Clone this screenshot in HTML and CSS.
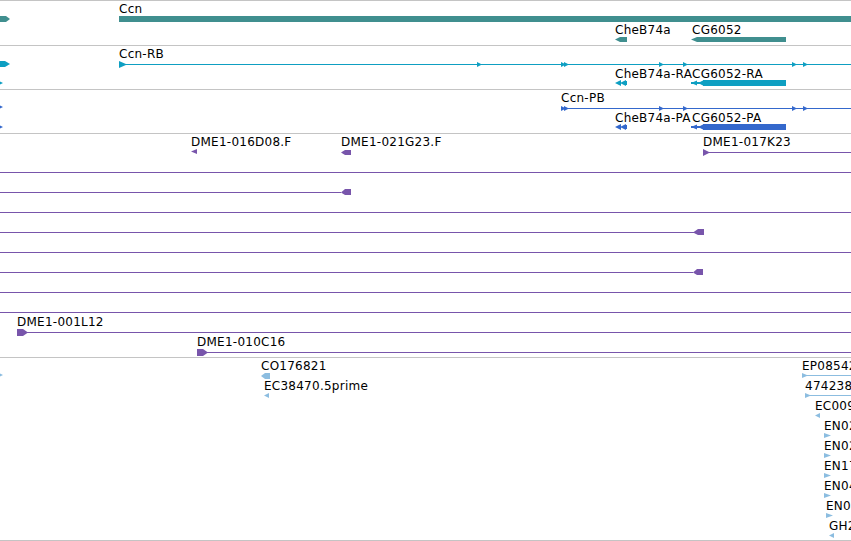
FILE: index.html
```html
<!DOCTYPE html>
<html lang="en">
<head>
    <meta charset="UTF-8">
    <title>Ccn region tracks</title>
    <link rel="stylesheet" href="styles.css">
</head>
<body>
    <div class="tracks">
        <!-- gene track -->
        <div class="track track-gene">
            <svg width="851" height="44">
                <polygon points="0,15 6,15 10,18 6,21 0,21"/>
                <text x="119" y="12">Ccn</text>
                <rect x="119" y="15" width="732" height="6"/>
                <text x="615" y="33">CheB74a</text>
                <text x="692" y="33">CG6052</text>
                <polygon points="615,38.5 620,36 627,36 627,41 620,41"/>
                <polygon points="691,38.5 697,36 786,36 786,41 697,41"/>
            </svg>
        </div>

        <!-- RA/RB transcripts -->
        <div class="track track-rna">
            <svg width="851" height="43">
                <polygon points="0,15 5,15 10,18 5,21 0,21"/>
                <polygon points="0,35.5 3,37 0,38.5"/>
                <text x="119" y="12">Ccn-RB</text>
                <rect x="119" y="18" width="732" height="1"/>
                <polygon points="119,15 127,18.5 119,22"/>
                <polygon points="477,16 482,18.5 477,21"/>
                <polygon points="561,16 566,18.5 561,21"/>
                <polygon points="564,16 569,18.5 564,21"/>
                <polygon points="659,16 664,18.5 659,21"/>
                <polygon points="683,16 688,18.5 683,21"/>
                <polygon points="792,16 797,18.5 792,21"/>
                <polygon points="803,16 808,18.5 803,21"/>
                <text x="615" y="32">CheB74a-RA</text>
                <text x="692" y="32">CG6052-RA</text>
                <polygon points="615,37 621,34 621,40"/>
                <polygon points="620,37 626,34 626,40"/>
                <rect x="625" y="35" width="2" height="4"/>
                <rect x="691" y="36" width="12" height="2"/>
                <polygon points="691,37 697,34.5 697,39.5"/>
                <polygon points="698,37 704,34 704,40"/>
                <rect x="703" y="34" width="83" height="6"/>
            </svg>
        </div>

        <!-- PA/PB proteins -->
        <div class="track track-protein">
            <svg width="851" height="43">
                <polygon points="0,15.5 3,17 0,18.5"/>
                <polygon points="0,35.5 3,37 0,38.5"/>
                <text x="561" y="12">Ccn-PB</text>
                <rect x="561" y="18" width="290" height="1"/>
                <polygon points="561,16 566,18.5 561,21"/>
                <polygon points="564,16 569,18.5 564,21"/>
                <polygon points="659,16 664,18.5 659,21"/>
                <polygon points="683,16 688,18.5 683,21"/>
                <polygon points="792,16 797,18.5 792,21"/>
                <polygon points="803,16 808,18.5 803,21"/>
                <text x="615" y="32">CheB74a-PA</text>
                <text x="692" y="32">CG6052-PA</text>
                <polygon points="615,37 621,34 621,40"/>
                <polygon points="620,37 626,34 626,40"/>
                <rect x="625" y="35" width="2" height="4"/>
                <rect x="691" y="36" width="12" height="2"/>
                <polygon points="691,37 697,34.5 697,39.5"/>
                <polygon points="698,37 704,34 704,40"/>
                <rect x="703" y="34" width="83" height="6"/>
            </svg>
        </div>

        <!-- BAC ends -->
        <div class="track track-bac">
            <svg width="851" height="223">
                <text x="191" y="12">DME1-016D08.F</text>
                <polygon points="191,17.5 197,15 197,20"/>
                <text x="341" y="12">DME1-021G23.F</text>
                <polygon points="341,18.5 345,16 351,16 351,21 345,21"/>
                <text x="703" y="12">DME1-017K23</text>
                <rect x="703" y="18" width="148" height="1"/>
                <polygon points="703,15 710,18.5 703,22"/>

                <rect x="0" y="38" width="851" height="1"/>
                <rect x="0" y="58" width="341" height="1"/>
                <polygon points="341,58.5 345,55 351,55 351,61 345,61"/>
                <rect x="0" y="78" width="851" height="1"/>
                <rect x="0" y="98" width="694" height="1"/>
                <polygon points="693,98.5 698,95 704,95 704,101 698,101"/>
                <rect x="0" y="118" width="851" height="1"/>
                <rect x="0" y="138" width="693" height="1"/>
                <polygon points="693,138.5 697,135 703,135 703,141 697,141"/>
                <rect x="0" y="158" width="851" height="1"/>
                <rect x="0" y="178" width="851" height="1"/>

                <text x="17" y="192">DME1-001L12</text>
                <rect x="17" y="198" width="834" height="1"/>
                <polygon points="17,195 23,195 28,198.5 23,202 17,202"/>
                <text x="197" y="212">DME1-010C16</text>
                <rect x="197" y="218" width="654" height="1"/>
                <polygon points="197,215 203,215 208,218.5 203,222 197,222"/>
            </svg>
        </div>

        <!-- ESTs -->
        <div class="track track-est">
            <svg width="851" height="182">
                <polygon points="0,15.5 3,17 0,18.5"/>
                <text x="261" y="12">CO176821</text>
                <polygon points="261,18 265,15 270,15 270,21 265,21"/>
                <text x="264" y="32">EC38470.5prime</text>
                <polygon points="264,37.5 269,35 269,40"/>

                <text x="802" y="12">EP085420</text>
                <rect x="802" y="17" width="49" height="1"/>
                <polygon points="802,15 808,17.5 802,20"/>
                <text x="805" y="32">474238</text>
                <rect x="805" y="37" width="46" height="1"/>
                <polygon points="805,35 811,37.5 805,40"/>
                <text x="815" y="52">EC00913</text>
                <polygon points="815,57.5 820,55 820,60"/>
                <text x="824" y="72">EN0271</text>
                <polygon points="824,75 831,77.5 824,80"/>
                <text x="824" y="92">EN0293</text>
                <polygon points="824,95 831,97.5 824,100"/>
                <text x="824" y="112">EN1745</text>
                <polygon points="824,115 831,117.5 824,120"/>
                <text x="824" y="132">EN0412</text>
                <polygon points="824,135 831,137.5 824,140"/>
                <text x="826" y="152">EN0418</text>
                <polygon points="826,155 833,157.5 826,160"/>
                <text x="829" y="172">GH2045</text>
                <polygon points="829,177.5 834,175 834,180"/>
            </svg>
        </div>
    </div>
</body>
</html>
```

FILE: styles.css
```css
body {
    margin: 0;
    background: #fff;
    font-family: 'DejaVu Sans', 'Liberation Sans', sans-serif;
    overflow: hidden;
}
.tracks {
    width: 851px;
    border-bottom: 1px solid #c4c4c4;
}
.track {
    border-top: 1px solid #c4c4c4;
    overflow: hidden;
}
.track svg {
    display: block;
}
.track text {
    font-size: 12px;
    letter-spacing: 0.25px;
    fill: #000;
}
.track-gene rect,
.track-gene polygon {
    fill: #408f8f;
}
.track-rna rect,
.track-rna polygon {
    fill: #0e9fc2;
}
.track-protein rect,
.track-protein polygon {
    fill: #3468cc;
}
.track-bac rect,
.track-bac polygon {
    fill: #7855ab;
}
.track-est rect,
.track-est polygon {
    fill: #8cbde0;
}
```
